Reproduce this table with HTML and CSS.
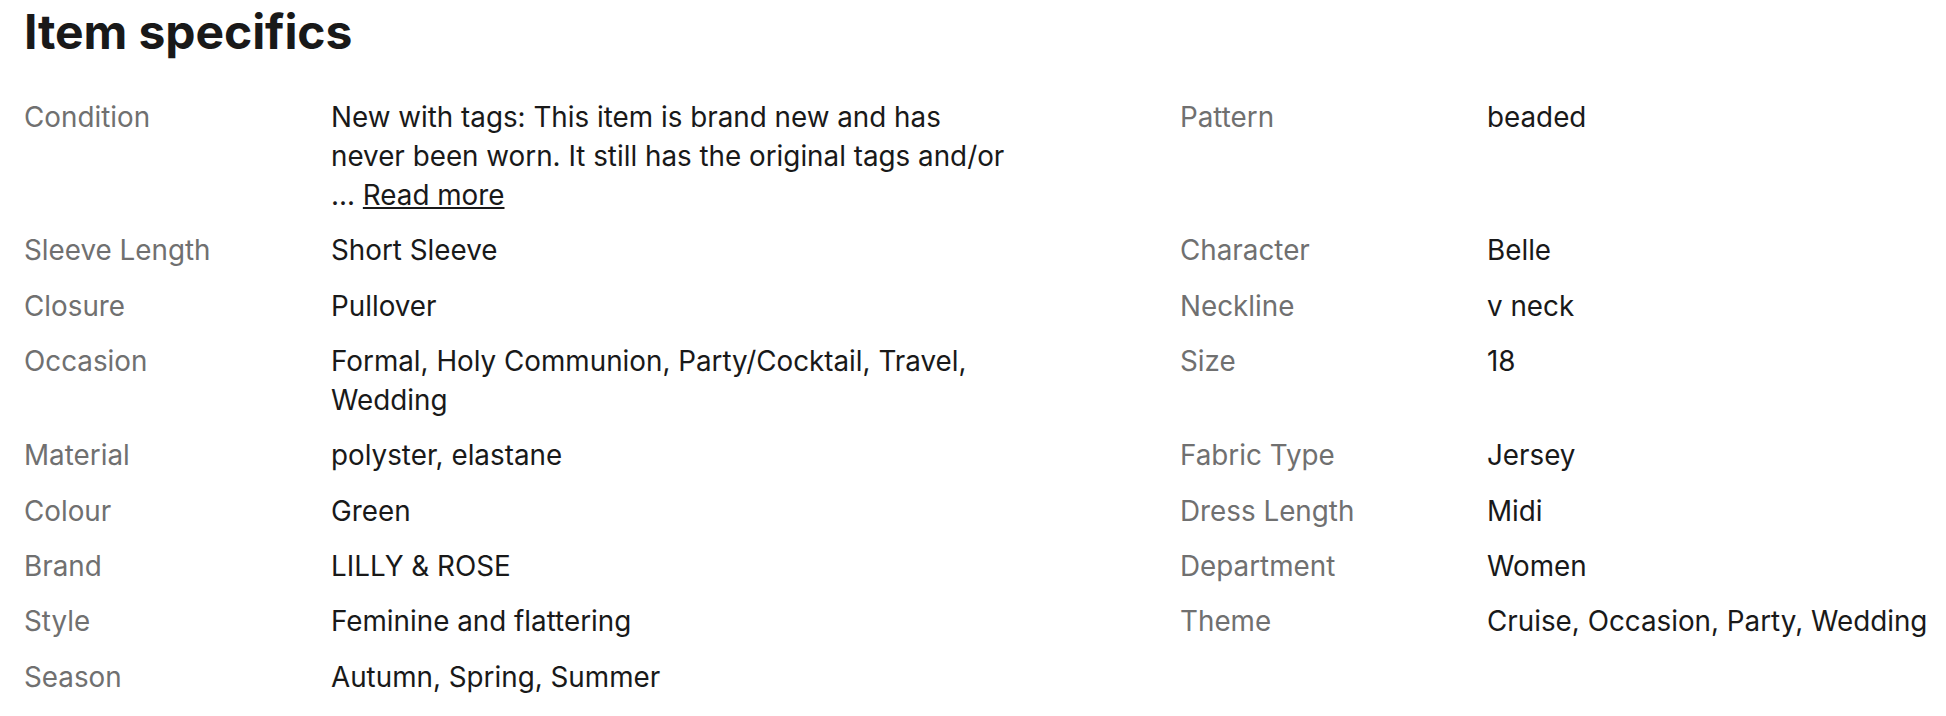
FILE: index.html
```html
<!DOCTYPE html>
<html lang="en">
<head>
<meta charset="utf-8">
<title>Item specifics</title>
<link rel="stylesheet" href="styles.css">
</head>
<body>
<section class="specifics">
  <h2 class="title">Item specifics</h2>
  <div class="rows">
    <div class="row">
      <dl class="pair"><dt class="label">Condition</dt><dd class="value">New with tags: This item is brand new and has never been worn. It still has the original tags and/or ... <a class="more" href="#">Read more</a></dd></dl>
      <dl class="pair"><dt class="label">Pattern</dt><dd class="value">beaded</dd></dl>
    </div>
    <div class="row">
      <dl class="pair"><dt class="label">Sleeve Length</dt><dd class="value">Short Sleeve</dd></dl>
      <dl class="pair"><dt class="label">Character</dt><dd class="value">Belle</dd></dl>
    </div>
    <div class="row">
      <dl class="pair"><dt class="label">Closure</dt><dd class="value">Pullover</dd></dl>
      <dl class="pair"><dt class="label">Neckline</dt><dd class="value">v neck</dd></dl>
    </div>
    <div class="row">
      <dl class="pair"><dt class="label">Occasion</dt><dd class="value">Formal, Holy Communion, Party/Cocktail, Travel, Wedding</dd></dl>
      <dl class="pair"><dt class="label">Size</dt><dd class="value">18</dd></dl>
    </div>
    <div class="row">
      <dl class="pair"><dt class="label">Material</dt><dd class="value">polyster, elastane</dd></dl>
      <dl class="pair"><dt class="label">Fabric Type</dt><dd class="value">Jersey</dd></dl>
    </div>
    <div class="row">
      <dl class="pair"><dt class="label">Colour</dt><dd class="value">Green</dd></dl>
      <dl class="pair"><dt class="label">Dress Length</dt><dd class="value">Midi</dd></dl>
    </div>
    <div class="row">
      <dl class="pair"><dt class="label">Brand</dt><dd class="value">LILLY &amp; ROSE</dd></dl>
      <dl class="pair"><dt class="label">Department</dt><dd class="value">Women</dd></dl>
    </div>
    <div class="row">
      <dl class="pair"><dt class="label">Style</dt><dd class="value">Feminine and flattering</dd></dl>
      <dl class="pair"><dt class="label">Theme</dt><dd class="value">Cruise, Occasion, Party, Wedding</dd></dl>
    </div>
    <div class="row">
      <dl class="pair"><dt class="label">Season</dt><dd class="value">Autumn, Spring, Summer</dd></dl>
      <div class="pair empty"></div>
    </div>
  </div>
</section>
</body>
</html>
```

FILE: styles.css
```css
html, body {
  margin: 0;
  padding: 0;
  background: #ffffff;
}
body {
  font-family: Inter, "Liberation Sans", sans-serif;
  color: #191919;
}
.specifics {
  padding: 0 24px;
}
.title {
  margin: 0;
  padding-top: 4px;
  font-size: 48px;
  line-height: 56px;
  font-weight: 700;
  letter-spacing: -0.1px;
  color: #191919;
}
.rows {
  display: flex;
  flex-direction: column;
  gap: 16.2px;
  margin-top: 38px;
}
.row {
  display: grid;
  grid-template-columns: 982px 1fr;
  column-gap: 174px;
}
.pair {
  display: grid;
  grid-template-columns: 307px 1fr;
  margin: 0;
  font-size: 27.8px;
  line-height: 39.1px;
}
.label {
  color: #707070;
}
.value {
  margin: 0;
  color: #191919;
}
.pair:last-child .value {
  white-space: nowrap;
}
.more {
  color: #191919;
  text-decoration: underline;
  text-underline-offset: 2px;
}
```
